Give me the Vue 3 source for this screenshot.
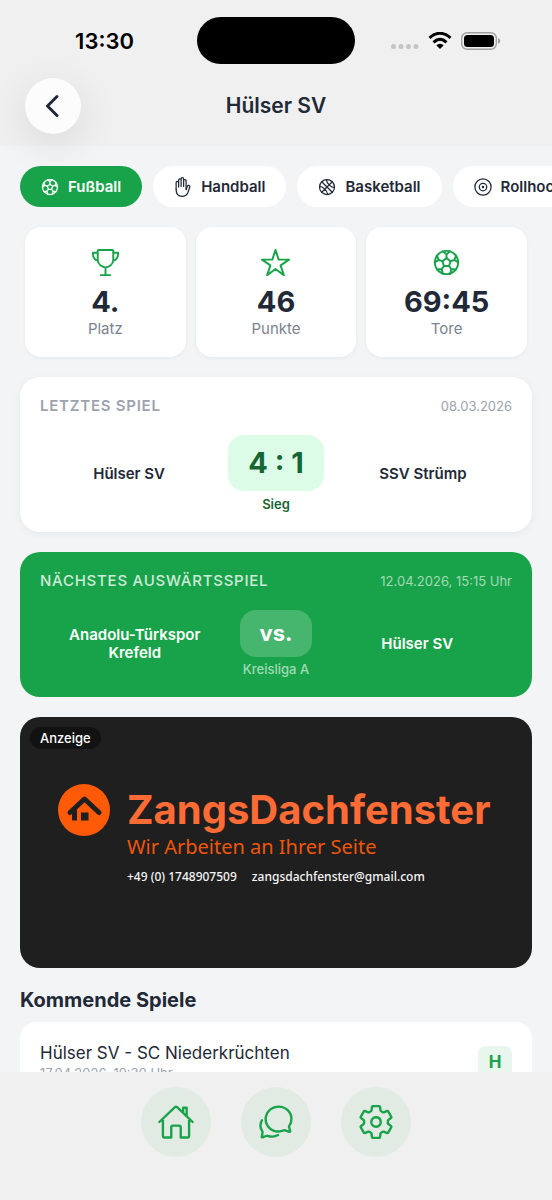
<script setup>
import { ref } from 'vue'

const seams = [0, 72, 144, 216, 288]
const sports = [
  { id: 'football', label: 'Fußball' },
  { id: 'hand', label: 'Handball' },
  { id: 'basket', label: 'Basketball' },
  { id: 'disc', label: 'Rollhockey' },
]
const active = ref('football')
const stats = [
  { icon: 'trophy', value: '4.', label: 'Platz' },
  { icon: 'star', value: '46', label: 'Punkte' },
  { icon: 'football', value: '69:45', label: 'Tore' },
]
</script>

<template>
  <div class="app">
    <svg class="sprite" aria-hidden="true">
      <symbol id="football" viewBox="0 0 512 512">
        <circle cx="256" cy="256" r="192" />
        <path d="M256 184L324 234L298 314H214L188 234Z" />
        <path v-for="a in seams" :key="a" :transform="`rotate(${a} 256 256)`" d="M256 184V122M198 70L256 122L314 70" />
      </symbol>
      <symbol id="hand" viewBox="0 0 512 512">
        <path d="M80 320V144a32 32 0 0132-32h0a32 32 0 0132 32v112M144 256V80a32 32 0 0132-32h0a32 32 0 0132 32v160M272 241V96a32 32 0 0132-32h0a32 32 0 0132 32v224M208 240V48a32 32 0 0132-32h0a32 32 0 0132 32v192" />
        <path d="M80 320c0 117.4 64 176 152 176s123.710-39.600 144-88l52.710-144c6.660-18.050 3.640-34.790-11.870-43.600h0c-15.520-8.820-35.910-4.280-44.310 11.680L336 320" />
      </symbol>
      <symbol id="basket" viewBox="0 0 512 512">
        <circle cx="256" cy="256" r="192" />
        <path transform="rotate(-45 256 256)" d="M256 64V448M64 256H448M132 110c64 84 64 208 0 292M380 110c-64 84-64 208 0 292" />
      </symbol>
      <symbol id="disc" viewBox="0 0 512 512">
        <circle cx="256" cy="256" r="208" /><circle cx="256" cy="256" r="96" /><circle class="solid" cx="256" cy="256" r="32" />
      </symbol>
      <symbol id="trophy" viewBox="0 0 512 512">
        <path d="M176 464h160M256 464V336M384 224c0-50.640-.080-134.630-.120-160a16 16 0 00-16-16l-223.790.260a16 16 0 00-16 15.950c0 30.580-.130 129.170-.130 159.790 0 64.280 83 112 128 112s128-47.720 128-112zM128 96H48v16c0 55.220 33.550 112 80 112M384 96h80v16c0 55.220-33.550 112-80 112" />
      </symbol>
      <symbol id="star" viewBox="0 0 512 512">
        <path d="M480 208H308L256 48l-52 160H32l140 96-54 160 138-100 138 100-54-160z" />
      </symbol>
    </svg>

    <header class="header">
      <div class="status">
        <span class="clock">13:30</span>
        <span class="island"></span>
        <span class="signals">
          <svg class="dots" viewBox="0 0 28 5"><circle cx="2.500" cy="2.500" r="2.500" /><circle cx="10" cy="2.500" r="2.500" /><circle cx="17.500" cy="2.500" r="2.500" /><circle cx="25" cy="2.500" r="2.500" /></svg>
          <svg class="wifi" viewBox="0 0 24 18"><path d="M1.500 5.800Q12-3.200 22.500 5.800M5.500 10.300Q12 4.300 18.500 10.300" /><path class="solid" d="M8.300 13.200Q12 10.200 15.700 13.200L12 17Z" /></svg>
          <svg class="battery" viewBox="0 0 40 18"><rect class="case" x=".7" y=".7" width="34.600" height="16.600" rx="5.500" /><rect x="3" y="3" width="30" height="12" rx="3.500" /><path class="cap" d="M37 6q2.300 1 2.300 3t-2.300 3z" /></svg>
        </span>
      </div>
      <div class="titlebar">
        <button class="back" type="button" aria-label="Zurück">
          <svg viewBox="0 0 14 24"><path d="M12 2.500L2.500 12L12 21.500" /></svg>
        </button>
        <h1>Hülser SV</h1>
      </div>
    </header>

    <main class="content">
      <div class="chips">
        <button v-for="s in sports" :key="s.id" type="button" class="chip" :class="{ active: active === s.id }" @click="active = s.id">
          <svg class="icon"><use :href="`#${s.id}`" /></svg>
          <span>{{ s.label }}</span>
        </button>
      </div>

      <section class="stats">
        <article v-for="s in stats" :key="s.label" class="stat">
          <svg class="icon"><use :href="`#${s.icon}`" /></svg>
          <strong>{{ s.value }}</strong>
          <span>{{ s.label }}</span>
        </article>
      </section>

      <section class="match last">
        <div class="match-head"><h2>LETZTES SPIEL</h2><time>08.03.2026</time></div>
        <div class="teams">
          <span class="team">Hülser SV</span>
          <div class="middle"><strong class="score">4 : 1</strong><span class="note">Sieg</span></div>
          <span class="team">SSV Strümp</span>
        </div>
      </section>

      <section class="match next">
        <div class="match-head"><h2>NÄCHSTES AUSWÄRTSSPIEL</h2><time>12.04.2026, 15:15 Uhr</time></div>
        <div class="teams">
          <span class="team">Anadolu-Türkspor Krefeld</span>
          <div class="middle"><strong class="score">vs.</strong><span class="note">Kreisliga A</span></div>
          <span class="team">Hülser SV</span>
        </div>
      </section>

      <section class="ad">
        <span class="ad-tag">Anzeige</span>
        <svg class="ad-logo" viewBox="0 0 52 52">
          <circle cx="26" cy="26" r="26" />
          <path class="roof" d="M12 28.500L26.500 15L41 28.500" />
          <path class="walls" d="M14 26L19 23V36.500H14ZM23 28.500H30.500V36.500H23Z" />
        </svg>
        <div class="ad-copy">
          <strong>ZangsDachfenster</strong>
          <span class="slogan">Wir Arbeiten an Ihrer Seite</span>
          <span class="contact"><span>+49 (0) 1748907509</span><span>zangsdachfenster@gmail.com</span></span>
        </div>
      </section>

      <h2 class="upcoming-title">Kommende Spiele</h2>
      <section class="upcoming">
        <div class="fixture">
          <span>Hülser SV - SC Niederkrüchten</span>
          <time>17.04.2026, 19:30 Uhr</time>
        </div>
        <span class="badge">H</span>
      </section>
    </main>

    <nav class="tabs" aria-label="Hauptnavigation">
      <button type="button" aria-label="Start">
        <svg class="icon" viewBox="0 0 512 512"><path d="M80 212v236a16 16 0 0016 16h96V328a24 24 0 0124-24h80a24 24 0 0124 24v136h96a16 16 0 0016-16V212M480 256L266.890 52c-5-5.280-16.690-5.340-21.780 0L32 256M400 179V64h-48v69" /></svg>
      </button>
      <button type="button" aria-label="Chat">
        <svg class="icon" viewBox="0 0 512 512"><path d="M431 320.600c-1-3.600 1.200-8.600 3.300-12.200a33.680 33.680 0 012.100-3.100A162 162 0 00464 215c.3-92.200-77.500-167-173.700-167-83.900 0-153.900 57.100-170.300 132.900a160.700 160.700 0 00-3.700 34.200c0 92.300 74.800 169.100 171 169.100 15.300 0 35.900-4.600 47.200-7.700s22.500-7.200 25.400-8.300a26.440 26.440 0 019.300-1.700 26 26 0 0110.100 2l56.700 20.100a13.520 13.520 0 003.900 1 8 8 0 008-8 12.850 12.850 0 00-.5-2.700z" /><path d="M66.460 232a146.230 146.230 0 006.390 152.670c2.310 3.490 3.610 6.190 3.210 8s-11.930 61.870-11.930 61.870a8 8 0 002.710 7.680A8.170 8.170 0 0072 464a7.260 7.260 0 002.910-.6l56.210-22a15.700 15.700 0 0112 .2c18.940 7.380 39.880 12 60.830 12A159.210 159.210 0 00284 432.110" /></svg>
      </button>
      <button type="button" aria-label="Einstellungen">
        <svg class="icon" viewBox="0 0 512 512"><path d="M262.290 192.310a64 64 0 1057.400 57.400 64.130 64.130 0 00-57.400-57.400zM416.390 256a154.340 154.340 0 01-1.530 20.790l45.210 35.460a10.810 10.810 0 012.450 13.750l-42.770 74a10.810 10.810 0 01-13.140 4.590l-44.900-18.080a16.110 16.110 0 00-15.170 1.750A164.480 164.480 0 01325 400.800a15.940 15.940 0 00-8.820 12.140l-6.730 47.890a11.080 11.080 0 01-10.680 9.170h-85.540a11.110 11.110 0 01-10.690-8.870l-6.720-47.820a16.070 16.070 0 00-9-12.220 155.300 155.300 0 01-21.460-12.570 16 16 0 00-15.110-1.710l-44.890 18.070a10.810 10.810 0 01-13.140-4.580l-42.770-74a10.800 10.800 0 012.450-13.750l38.210-30a16.050 16.050 0 006-14.080c-.36-4.170-.58-8.330-.58-12.500s.21-8.270.58-12.350a16 16 0 00-6.070-13.940l-38.190-30A10.810 10.810 0 0149.480 186l42.770-74a10.810 10.810 0 0113.140-4.590l44.900 18.080a16.110 16.110 0 0015.170-1.750A164.480 164.480 0 01187 111.200a15.940 15.940 0 008.820-12.140l6.730-47.890A11.080 11.080 0 01213.230 42h85.540a11.110 11.110 0 0110.690 8.870l6.720 47.820a16.070 16.070 0 009 12.220 155.300 155.300 0 0121.460 12.570 16 16 0 0015.110 1.710l44.890-18.070a10.810 10.810 0 0113.140 4.580l42.770 74a10.800 10.800 0 01-2.450 13.750l-38.210 30a16.050 16.050 0 00-6.050 14.080c.33 4.140.55 8.300.55 12.470z" /></svg>
      </button>
    </nav>
  </div>
</template>

<style>
body {
  margin: 0;
}
</style>

<style scoped>
* {
  box-sizing: border-box;
}
.app {
  display: flex;
  flex-direction: column;
  height: 100vh;
  overflow: hidden;
  background: #f3f4f6;
  color: #1f2937;
  font-family: Inter, "Liberation Sans", sans-serif;
}
h1,
h2 {
  margin: 0;
}
button {
  border: 0;
  padding: 0;
  font: inherit;
  color: inherit;
  cursor: pointer;
}
.sprite {
  position: absolute;
  width: 0;
  height: 0;
}
.icon {
  fill: none;
  stroke: currentColor;
  stroke-width: 32;
  stroke-linecap: round;
  stroke-linejoin: round;
}
.solid {
  fill: currentColor;
  stroke: none;
}
.header {
  flex: none;
  height: 146px;
  background: #f0f0f0;
}
.status {
  display: grid;
  grid-template-columns: 1fr 158px 1fr;
  align-items: center;
  padding-top: 17px;
}
.clock {
  justify-self: center;
  padding-left: 12px;
  font-size: 22px;
  line-height: 28px;
  font-weight: 600;
  color: #000;
}
.island {
  height: 47px;
  border-radius: 24px;
  background: #000;
}
.signals {
  display: flex;
  align-items: center;
  justify-content: center;
  gap: 9px;
  padding-right: 15px;
}
.dots {
  width: 28px;
  height: 5px;
  margin-top: 12px;
  fill: #c4c4c4;
}
.wifi {
  width: 24px;
  height: 18px;
  fill: none;
  stroke: #000;
  stroke-width: 3;
}
.wifi .solid {
  fill: #000;
  stroke: none;
}
.battery {
  width: 40px;
  height: 18px;
}
.battery .case {
  fill: none;
  stroke: #a0a0a0;
  stroke-width: 1.4;
}
.battery .cap {
  fill: #a0a0a0;
}
.titlebar {
  display: grid;
  grid-template-columns: 56px 1fr 56px;
  align-items: center;
  padding: 14px 25px 0;
}
.back {
  display: grid;
  place-items: center;
  width: 56px;
  height: 56px;
  border-radius: 50%;
  background: #fcfcfc;
  box-shadow: 0 10px 40px rgba(0, 0, 0, 0.1);
}
.back svg {
  width: 14px;
  height: 24px;
  margin-right: 3px;
  fill: none;
  stroke: #1f2937;
  stroke-width: 3;
  stroke-linecap: round;
  stroke-linejoin: round;
}
h1 {
  text-align: center;
  font-size: 21px;
  line-height: 28px;
  font-weight: 600;
}
.content {
  flex: 1;
  min-height: 0;
  overflow: hidden;
  padding: 20px 20px 0;
}
.chips {
  display: flex;
  gap: 11px;
  margin-right: -20px;
  overflow: hidden;
}
.chip {
  flex: none;
  display: flex;
  align-items: center;
  gap: 8px;
  height: 41px;
  padding: 0 21px 0 20px;
  border-radius: 21px;
  background: #fff;
  font-size: 15px;
  font-weight: 600;
}
.chip.active {
  background: #18a34a;
  color: #fff;
}
.chip .icon {
  width: 20px;
  height: 20px;
}
.stats {
  display: grid;
  grid-template-columns: repeat(3, 1fr);
  gap: 10px;
  margin: 20px 5px;
}
.stat {
  display: flex;
  flex-direction: column;
  align-items: center;
  height: 130px;
  padding-top: 20px;
  border-radius: 16px;
  background: #fff;
  box-shadow: 0 1px 4px rgba(0, 0, 0, 0.05);
}
.stat .icon {
  width: 31px;
  height: 31px;
  color: #18a34a;
}
.stat strong {
  margin-top: 6px;
  font-size: 29px;
  line-height: 36px;
  font-weight: 700;
}
.stat span {
  font-size: 15px;
  line-height: 18px;
  color: #7b8290;
}
.match {
  margin-bottom: 20px;
  padding: 20px;
  border-radius: 20px;
}
.last {
  background: #fff;
  box-shadow: 0 2px 8px rgba(0, 0, 0, 0.05);
}
.next {
  background: #18a34a;
  color: #fff;
}
.match-head {
  display: flex;
  align-items: center;
  justify-content: space-between;
}
.match h2 {
  font-size: 15px;
  line-height: 18px;
  font-weight: 600;
  letter-spacing: 0.05em;
  color: #9ca3af;
}
.match time {
  font-size: 13px;
  line-height: 18px;
  color: #9ca3af;
}
.match.next h2 {
  font-weight: 500;
  color: rgba(255, 255, 255, 0.8);
}
.match.next time {
  color: rgba(255, 255, 255, 0.6);
}
.teams {
  display: grid;
  grid-template-columns: 1fr auto 1fr;
  column-gap: 10px;
  align-items: center;
  padding-top: 20px;
}
.team {
  padding: 0 5px;
  text-align: center;
  font-size: 15px;
  line-height: 18px;
  font-weight: 600;
}
.middle {
  display: flex;
  flex-direction: column;
  align-items: center;
}
.score {
  padding: 10px 20px;
  border-radius: 16px;
  background: #dcfce7;
  color: #166534;
  font-size: 29px;
  line-height: 36px;
  font-weight: 700;
}
.note {
  margin-top: 5px;
  font-size: 13px;
  line-height: 16px;
  font-weight: 600;
  color: #166534;
}
.next .score {
  background: rgba(255, 255, 255, 0.2);
  color: #fff;
  font-size: 22px;
  line-height: 27px;
}
.next .note {
  line-height: 15px;
  font-weight: 500;
  color: rgba(255, 255, 255, 0.6);
}
.ad {
  position: relative;
  display: flex;
  align-items: flex-start;
  gap: 17px;
  height: 251px;
  padding: 67px 20px 0 38px;
  border-radius: 20px;
  background: #1f1f1f;
}
.ad-tag {
  position: absolute;
  top: 10px;
  left: 10px;
  padding: 3px 10px;
  border-radius: 12px;
  background: #121212;
  color: #fff;
  font-size: 13px;
  line-height: 16px;
  font-weight: 500;
}
.ad-logo {
  flex: none;
  width: 52px;
  height: 52px;
  fill: #ff5a08;
}
.ad-logo .roof {
  fill: none;
  stroke: #1f1f1f;
  stroke-width: 5;
  stroke-linecap: round;
  stroke-linejoin: round;
}
.ad-logo .walls {
  fill: #1f1f1f;
}
.ad-copy {
  display: flex;
  flex-direction: column;
  padding-top: 2px;
  white-space: nowrap;
}
.ad-copy strong {
  font-size: 40px;
  line-height: 48px;
  font-weight: 700;
  color: #ff6b35;
}
.slogan {
  font-family: "Noto Sans", sans-serif;
  font-size: 20px;
  line-height: 26px;
  color: #f0560a;
}
.contact {
  display: flex;
  gap: 15px;
  padding-top: 8px;
  font-family: "Noto Sans", sans-serif;
  font-size: 12px;
  line-height: 18px;
  font-weight: 500;
  color: #f5f5f5;
}
.upcoming-title {
  margin: 20px 0 10px;
  font-size: 20px;
  line-height: 24px;
  font-weight: 700;
}
.upcoming {
  display: flex;
  align-items: center;
  justify-content: space-between;
  padding: 20px;
  border-radius: 16px;
  background: #fff;
}
.fixture {
  display: flex;
  flex-direction: column;
  font-size: 17px;
  line-height: 22px;
}
.fixture time {
  font-size: 13px;
  line-height: 18px;
  color: #9ca3af;
}
.badge {
  width: 34px;
  border-radius: 8px;
  background: #e8f6ed;
  color: #18a34a;
  text-align: center;
  font-size: 17px;
  line-height: 32px;
  font-weight: 700;
}
.tabs {
  position: relative;
  flex: none;
  display: flex;
  justify-content: center;
  gap: 30px;
  height: 128px;
  padding-top: 15px;
  background: #f0f0f0;
}
.tabs button {
  display: grid;
  place-items: center;
  width: 70px;
  height: 70px;
  border-radius: 50%;
  background: #e1ebe3;
  color: #18a34a;
}
.tabs .icon {
  width: 38px;
  height: 38px;
}
</style>
